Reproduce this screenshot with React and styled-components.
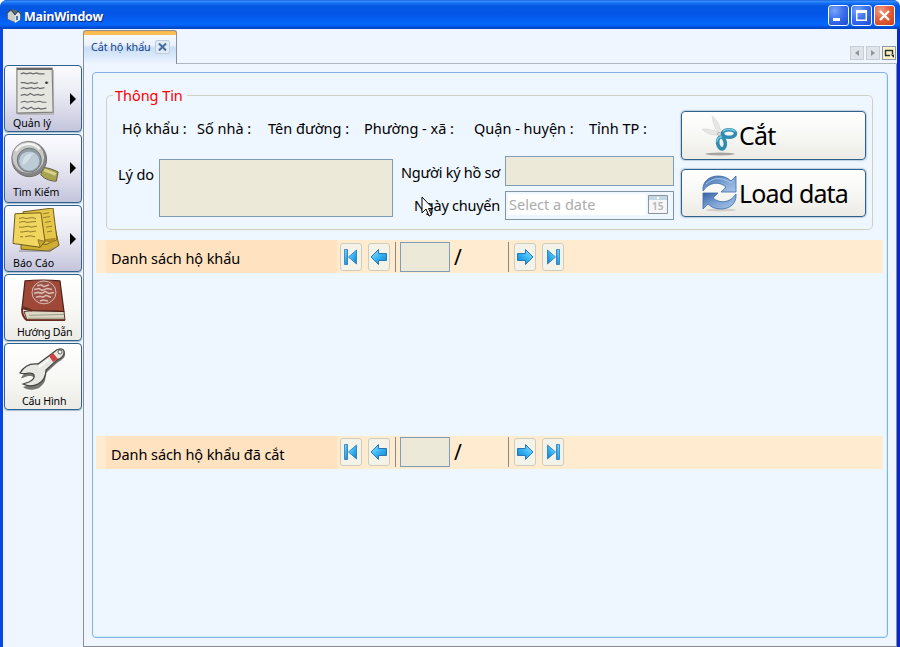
import React from 'react';
import styled, { createGlobalStyle } from 'styled-components';

const Global = createGlobalStyle`
  * { box-sizing: border-box; }
  body { margin: 0; overflow: hidden; font-family: "Noto Sans", sans-serif; color: #000; }
  button, input { font-family: inherit; margin: 0; padding: 0; }
  svg { display: block; flex: none; }
`;

const Window = styled.div`
  width: 900px; height: 647px;
  display: flex; flex-direction: column;
  background: #0a50e8;
  border-radius: 7px 7px 0 0;
  overflow: hidden;
`;
const TitleBar = styled.header`
  height: 29px; flex: none;
  display: flex; align-items: center;
  padding: 2px 5px 0 7px;
  background: linear-gradient(180deg, #0a4fd6 0, #3d92fb 1px, #1672f5 3px, #0558e2 6px, #0355e6 14px, #0563f8 22px, #0666fb 25px, #0350d8 27px, #0044c0 29px);
`;
const TitleText = styled.h1`
  flex: 1; margin: 2px 0 0 3px;
  font: 700 12.5px/16px "Open Sans", "Noto Sans", sans-serif;
  letter-spacing: ${p => p.$spacing};
  color: #fff; text-shadow: 1px 1px 0 #0a2a80;
`;
const CaptionButtons = styled.div` display: flex; gap: 2px; `;
const CaptionButton = styled.button`
  width: 21px; height: 21px;
  border: 1px solid #f4f8ff; border-radius: 3px;
  background: ${p => p.$close
    ? 'radial-gradient(circle at 30% 25%, #f0a088 0, #e2603c 45%, #cf3d13 100%)'
    : 'radial-gradient(circle at 30% 25%, #7ba5fa 0, #3d71ef 45%, #1c48d4 100%)'};
`;

const Frame = styled.div`
  flex: 1; display: flex; min-height: 0;
  border-left: 3px solid #0a46e4;
  border-right: 3px solid #0628cf;
  background: #eff6ff;
`;
const Sidebar = styled.nav`
  width: 80px; flex: none;
  display: grid; grid-template-rows: 67px 69px 67px 67px 67px; row-gap: 2px;
  align-content: start;
  padding: 36px 0 0 1px;
`;
const NavButton = styled.button`
  width: 78px;
  display: flex; flex-direction: column;
  position: relative;
  border: 1px solid #2c628b; border-radius: 4px;
  background: ${p => p.$menu
    ? 'linear-gradient(180deg, #fbfbff 0, #ececf5 40%, #cfcfe3 85%, #c3c3da 100%)'
    : 'linear-gradient(180deg, #fff 0, #f6f6f3 60%, #ecebe5 100%)'};
  box-shadow: 0 1px 1px #a9bccc;
`;
const NavArt = styled.span`
  height: 50px; flex: none;
  padding-left: ${p => p.$left}px; padding-top: ${p => p.$top}px;
`;
const NavLabel = styled.span`
  font-size: 10.6px; line-height: 14px; height: 15px; white-space: nowrap;
  padding-left: ${p => p.$left}px; text-align: left;
  letter-spacing: ${p => p.$spacing || '0'};
`;
const MenuMark = styled.i`
  position: absolute; right: 5px; top: 27px;
  border-left: 6px solid #000; border-top: 6px solid transparent; border-bottom: 6px solid transparent;
`;

const Main = styled.main` flex: 1; display: flex; flex-direction: column; min-width: 0; `;
const TabStrip = styled.div`
  height: 35px; flex: none; display: flex; align-items: flex-end; justify-content: space-between;
  padding: 1px 1px 0 0;
  box-shadow: inset 0 -1px #b0b8c2;
`;
const Tab = styled.div`
  width: 94px; height: 34px;
  display: flex; align-items: center; gap: 4px;
  padding: 2px 0 4px 7px;
  border: 1px solid #8c9199; border-bottom: 0; border-radius: 3px 3px 0 0;
  font-size: 10.8px; color: #15428b; white-space: nowrap;
  letter-spacing: ${p => p.$spacing};
  background: linear-gradient(180deg, #f0a93a 0, #ffbe52 1px, #ffbe52 4px, #f6faff 4px, #e9f2fd 14px, #c9dff6 17px, #dceafa 26px, #eff6ff 33px);
`;
const TabClose = styled.button`
  width: 15px; height: 14px; display: grid; place-items: center;
  border: 1px solid #c0cdda; border-radius: 2px; background: #e1ebf5;
`;
const TabTools = styled.div` display: flex; gap: 2px; padding-bottom: 4px; `;
const TabTool = styled.button`
  width: 14px; height: 14px; display: grid; place-items: center;
  border: 1px solid ${p => (p.$active ? '#8a96b8' : '#c7cdd4')};
  background: ${p => (p.$active ? '#fff3c2' : '#dfe4ea')};
`;
const TabBody = styled.section`
  flex: 1; display: flex; padding: 8px 8px 8px 8px;
  border: solid #8d8d91; border-width: 0 1px 1px 1px;
`;
const Panel = styled.div`
  width: 796px; flex: none; display: flex; flex-direction: column;
  border: 1px solid #86b0e6; border-radius: 4px;
  box-shadow: inset -1px -1px #c9f3fb;
  background: #eef6ff;
  padding: 14px 4px 0 3px;
`;

const Group = styled.fieldset`
  position: relative; min-width: 0;
  height: 143px; margin: 0 10px 0 10px; padding: 0 6px 0 11px;
  border: 1px solid #d0d0bf; border-radius: 5px;
  display: grid; grid-template-columns: 557px 185px; column-gap: 6px;
`;
const Legend = styled.legend`
  padding: 0 4px 0 2px; margin-left: -5px;
  color: #f00; font-size: 14.5px; line-height: 16px;
  letter-spacing: ${p => p.$spacing};
`;
const Details = styled.div` display: flex; flex-direction: column; `;
const Facts = styled.div`
  display: grid; grid-template-columns: 75px 71px 96px 110px 115px auto;
  padding: 15px 0 0 4px; height: 53px;
`;
const Text = styled.span`
  font-size: ${p => p.$size || 14.5}px; line-height: 20px; white-space: nowrap;
  letter-spacing: ${p => p.$spacing || '0'};
`;
const Form = styled.div`
  display: grid; grid-template-columns: 41px 234px 112px 169px; align-items: start;
`;
const ReasonLabel = styled.div` display: flex; padding-top: 8px; `;
const Reason = styled.div` height: 58px; margin-top: 3px; border: 1px solid #7f9db9; background: #ece9d8; `;
const Labels = styled.div`
  display: flex; flex-direction: column; align-items: flex-end; gap: 13px; padding: 6px 5px 0 0;
`;
const Fields = styled.div` display: flex; flex-direction: column; gap: 5px; `;
const Input = styled.input`
  width: ${p => p.$w}px; height: 30px; flex: none;
  border: 1px solid #7f9db9; background: #ece9d8; border-radius: 0;
`;
const DateBox = styled.div`
  height: 29px; display: flex; align-items: center; justify-content: space-between;
  padding: 0 5px 3px 3px; border: 1px solid #8294a8;
  background: linear-gradient(#fff, #fff) 2px 2px / 138px 21px no-repeat #eef6ff;
  color: #ababab;
`;
const Actions = styled.div` display: flex; flex-direction: column; gap: 9px; padding-top: 8px; `;
const Action = styled.button`
  height: ${p => p.$h}px; flex: none; display: flex; align-items: center;
  padding: 0 0 1px 19px;
  border: 1px solid #2f628b; border-radius: 4px;
  background: linear-gradient(180deg, #fff 0, #f7f7f4 50%, #ecebe5 100%);
  box-shadow: 0 0 1px 1px #bfd0e2;
`;

const ListBar = styled.div`
  height: 33px; margin-top: ${p => p.$top}px; padding: 0 0 ${p => p.$lift}px 10px;
  display: flex; align-items: center;
  background: linear-gradient(#ffe2c0, #ffe2c0) 10px 0 / 231px 33px no-repeat #ffebcf;
`;
const BarTitle = styled.div` width: 234px; padding: ${p => 3 + p.$lift}px 0 0 5px; display: flex; `;
const Buttons = styled.div` display: flex; gap: 6px; `;
const PagerButton = styled.button`
  width: 22px; height: 28px; display: grid; place-items: center;
  border: 1px solid #cfcdba; border-radius: 3px; background: #f4f3ea;
`;
const Rule = styled.i` width: 1px; height: 30px; margin: 0 ${p => p.$r}px 0 5px; background: #8b8b86; `;
const Total = styled.div` width: 53px; padding: 1px 0 0 4px; font-size: 21px; line-height: 28px; `;
const Pointer = styled.svg` position: absolute; left: 314px; top: 93px; z-index: 2; `;

const PageArt = () => (
  <svg width="40" height="48" viewBox="0 0 42 49" preserveAspectRatio="none">
    <path d="M3 3h38v46H3z" fill="#aaa" opacity=".7" />
    <path d="M2 1h37l1 45-38 1z" fill="#e6e6e1" stroke="#82827e" strokeWidth="1.2" />
    <path d="M2 2h37" stroke="#666" strokeWidth="2" />
    <path d="M6 7l3-1 3 1 4-1 3 1 4-1 2 1 6 0M6 16l4 0 3 1 4-1 4 1 3-1m8 0h3M6 22l3-1 3 1 5-1 3 1 4-1 2 1 5-1M6 29l4-1 3 1 3-2 4 2 4-1 3 1 4-1M6 36l4-1 3 1 5-1 3 1 5-1 3 1 4 0M6 43l3-2 4 2 4-2 3 2 5-1 2 1 6-1" fill="none" stroke="#6a6a6e" strokeWidth="1.2" />
    <circle cx="33" cy="16" r="1.3" fill="#333" />
  </svg>
);
const LensArt = () => (
  <svg width="52" height="45" viewBox="0 0 54 49" preserveAspectRatio="none">
    <path d="M31 27l6 6-4 3-5-6z" fill="#777" />
    <path d="M34 31c5 0 13 3 16 5l-2 10c-5 0-12-2-16-7z" fill="#a8a254" stroke="#5d5a34" />
    <path d="M36 32l12 5-1 3-12-5z" fill="#d8d387" />
    <ellipse cx="20" cy="22" rx="18" ry="19" fill="#858585" stroke="#6a6a6a" />
    <ellipse cx="19" cy="20" rx="17" ry="17.5" fill="#c9c9c9" stroke="#777" strokeWidth=".8" />
    <ellipse cx="20" cy="23" rx="12.5" ry="13" fill="#8f9aa2" stroke="#6f7478" />
    <ellipse cx="20" cy="24" rx="10.5" ry="10.5" fill="#bccbd5" />
    <path d="M13 28c0-9 4-12 13-13-6 2-5 11-13 13z" fill="#d5e1e9" />
    <path d="M6 13C11 4 25 3 31 11" stroke="#f6f6f6" strokeWidth="2.5" fill="none" />
  </svg>
);
const NotesArt = () => (
  <svg width="50" height="46" viewBox="0 0 50 48" preserveAspectRatio="none">
    <path d="M10 18l33-2 5 23-9 6-29-2z" fill="#d1ae31" stroke="#6b5b1b" />
    <path d="M12 4L42 0l4 33-11 5-23-4z" fill="#e7c74a" stroke="#6b5b1b" />
    <path d="M30 33l15-2-4 6z" fill="#b28c22" />
    <path d="M4 6l26-1 4 30-5 6-27-4z" fill="#f0d55f" stroke="#6b5b1b" />
    <path d="M27 33l7 2-5 6z" fill="#c9a431" stroke="#6b5b1b" strokeWidth=".7" />
    <path d="M8 11l4-1 3 1 6-1 4 1M8 15l5-1 3 1 9-1M8 20l4 0 5-1 3 1 6-1M9 25h3l5-1 2 1 6-1M9 30l3 0m2 0l5-1 5 1M32 6l6-1M32 10l7-1M34 15l6-1M35 20l6-1M36 25l5-1" stroke="#8f7b2c" strokeWidth="1" fill="none" />
    <path d="M8 45h28l9-4" stroke="#77777b" strokeWidth="1.2" fill="none" opacity=".6" />
  </svg>
);
const BookArt = () => (
  <svg width="47" height="44" viewBox="0 0 47 46" preserveAspectRatio="none">
    <path d="M4 34l9-1 31 1 1 9-38 0z" fill="#ddd8c4" stroke="#5a2b24" />
    <path d="M9 38l35-1M8 41h36" stroke="#8e8978" strokeWidth=".8" />
    <path d="M5 2C14 1 31 1 40 2l4 32c-12-1-25-1-33-1L2 31z" fill="#a04838" stroke="#4d2019" strokeWidth="1.2" />
    <path d="M2 30c2-1 6 1 10 3M2 31c0 6 2 10 5 12h38" stroke="#6c2a20" strokeWidth="2" fill="none" />
    <circle cx="24" cy="14" r="12" fill="#9a5147" stroke="#d9bcb1" />
    <path d="M17 7l4-1 3 2 5-2M14 11l5-1 3 2 5-2 5 1M14 15l4-1 4 1 3-2 4 2 5-1M16 19l4-1 3 1 3-2 5 2M20 23l3-1 5 1" stroke="#dcb8ad" strokeWidth="1.6" fill="none" />
  </svg>
);
const WrenchArt = () => (
  <svg width="48" height="46" viewBox="0 0 48 46">
    <path d="M4 27c5-6 12-8 15-9l17-14c4-4 10-3 10 1 1 4-3 7-8 10L27 25c-1 5 1 9-7 15-7 3-12 2-16-1 3-1 9-2 11-5 2-4-1-6-4-6-5 0-7 3-9 2z" fill="#777772" transform="translate(0 1)" />
    <path d="M1 26c4-7 10-10 18-9L35 5c4-4 9-4 10-1 1 4-3 8-7 9L27 23c0 6-2 11-8 14-6 3-11 2-15 0l6-2c4-2 6-4 5-7-2-4-9 0-14-2z" fill="#e8e8e2" stroke="#454542" strokeWidth="1.3" />
    <path d="M30 9l4-3 5 6-5 3z" fill="#cb4545" />
    <circle cx="41" cy="5" r="2" fill="#fff" stroke="#55554f" />
    <path d="M20 20L29 13" stroke="#fff" strokeWidth="2" />
  </svg>
);
const Scissors = () => (
  <svg width="38" height="42" viewBox="0 0 38 42">
    <ellipse cx="19" cy="40" rx="14.5" ry="1.5" fill="#a5a5a2" />
    <path d="M11 2c5 4 8 9 9 17l-3 0C14 14 12 8 11 2z" fill="#e6e6e3" stroke="#d2d2d0" strokeWidth=".6" />
    <path d="M1 15c7 0 12 1 17 4l-2 2C9 21 5 19 1 15z" fill="#e6e6e3" stroke="#d2d2d0" strokeWidth=".6" />
    <ellipse cx="28" cy="19.5" rx="6.5" ry="3.8" fill="none" stroke="#2f8cb0" strokeWidth="3.6" />
    <ellipse cx="20.500" cy="29" rx="3.8" ry="6" fill="none" stroke="#2f8cb0" strokeWidth="3.6" transform="rotate(-8 20 29)" />
    <path d="M22 17.500c3-3 9-3 12 0M16 28c0-4 2-5 5-5" stroke="#7acce2" strokeWidth="1.3" fill="none" />
    <circle cx="18" cy="20" r="1.5" fill="#eee" stroke="#999" strokeWidth=".7" />
  </svg>
);
const Reload = () => (
  <svg width="38" height="38" viewBox="0 0 38 38">
    <defs><linearGradient id="blue" x2="1" y2="1"><stop stopColor="#3563a8" /><stop offset=".5" stopColor="#7ba2d4" /><stop offset="1" stopColor="#a9c6e8" /></linearGradient></defs>
    <ellipse cx="20" cy="36" rx="15" ry="1.5" fill="#cfcfcb" />
    <path d="M2 17C1 7 9 2 17 2c6 0 10 2 13 5l5-5v16H20l5-5C18 7 8 8 2 17z" fill="url(#blue)" stroke="#3f6aa6" strokeWidth=".8" />
    <path d="M35 20c1 10-7 15-15 15-6 0-10-2-13-5l-5 5V19h15l-5 5c7 6 17 5 23-4z" fill="url(#blue)" stroke="#3f6aa6" strokeWidth=".8" />
    <path d="M5 10C13 2 23 4 30 9l3-3" fill="none" stroke="#a9c9ec" />
  </svg>
);
const Arrow = ({ flip, end }) => (
  <svg width="18" height="18" viewBox="0 0 18 18">
    <defs><linearGradient id="sky" x2="1" y2="1"><stop stopColor="#9be4ff" /><stop offset=".5" stopColor="#35b5f4" /><stop offset="1" stopColor="#1679c8" /></linearGradient></defs>
    <g transform={flip ? 'translate(18 0) scale(-1 1)' : undefined}>
      {end
        ? <g fill="url(#sky)" stroke="#2876b8" strokeWidth=".8"><path d="M2.5 1.5h3v15h-3z" /><path d="M14.5 2v14L6.5 9z" /></g>
        : <path d="M1 9l7.5-7.5v4h8v7h-8v4z" fill="url(#sky)" stroke="#2876b8" strokeWidth="1" />}
    </g>
  </svg>
);

const navItems = [
  { label: 'Quản lý', art: <PageArt />, artLeft: 10, artTop: 1, left: 8, menu: true },
  { label: 'Tìm Kiếm', art: <LensArt />, artLeft: 5, artTop: 4, left: 8, menu: true },
  { label: 'Báo Cáo', art: <NotesArt />, artLeft: 6, artTop: 2, left: 8, menu: true },
  { label: 'Hướng Dẫn', art: <BookArt />, artLeft: 15, artTop: 4, left: 12, spacing: '-0.25px' },
  { label: 'Cấu Hình', art: <WrenchArt />, artLeft: 14, artTop: 3, left: 17, spacing: '-0.15px' },
];
const facts = ['Hộ khẩu :', 'Số nhà :', 'Tên đường :', 'Phường - xã :', 'Quận - huyện :', 'Tỉnh TP :'];

const PagedList = ({ title, top, lift }) => (
  <ListBar $top={top} $lift={lift}>
    <BarTitle $lift={lift}><Text $spacing="-0.08px">{title}</Text></BarTitle>
    <Buttons>
      <PagerButton><Arrow end /></PagerButton>
      <PagerButton><Arrow /></PagerButton>
    </Buttons>
    <Rule $r={4} />
    <Input $w={50} readOnly />
    <Total>/</Total>
    <Rule $r={5} />
    <Buttons>
      <PagerButton><Arrow flip /></PagerButton>
      <PagerButton><Arrow flip end /></PagerButton>
    </Buttons>
  </ListBar>
);

export default function App() {
  return (
    <Window>
      <Global />
      <TitleBar>
        <svg width="14" height="15" viewBox="0 0 14 15">
          <path d="M0 4l5-3 9 3v7l-6 4-8-4z" fill="#5c6b78" />
          <path d="M1 5l3-2 4 4v7l-7-3z" fill="#c9cfcd" /><path d="M8 7l3-3 2 2v6l-5 3z" fill="#e2e4de" />
          <path d="M0 5l4-4 4 6 3-4 3 3" stroke="#2d4250" fill="none" /><path d="M9 8h2v4H9z" fill="#4b77a8" />
        </svg>
        <TitleText $spacing="-0.3px">MainWindow</TitleText>
        <CaptionButtons>
          <CaptionButton><svg width="19" height="19"><path d="M4 12h7v3H4z" fill="#fff" /></svg></CaptionButton>
          <CaptionButton><svg width="19" height="19"><path d="M4 4h11v11H4zM5.500 7v6.500h8V7z" fill="#fff" fillRule="evenodd" /></svg></CaptionButton>
          <CaptionButton $close><svg width="19" height="19"><path d="M5 5l9 9M14 5l-9 9" stroke="#fff" strokeWidth="2.3" /></svg></CaptionButton>
        </CaptionButtons>
      </TitleBar>
      <Frame>
        <Sidebar>
          {navItems.map(n => (
            <NavButton key={n.label} $menu={n.menu}>
              <NavArt $left={n.artLeft} $top={n.artTop}>{n.art}</NavArt>
              <NavLabel $left={n.left} $spacing={n.spacing}>{n.label}</NavLabel>
              {n.menu && <MenuMark />}
            </NavButton>
          ))}
        </Sidebar>
        <Main>
          <TabStrip>
            <Tab $spacing="-0.1px">
              Cắt hộ khẩu
              <TabClose><svg width="9" height="8"><path d="M1 .5l7 7M8 .5l-7 7" stroke="#3f6b9e" strokeWidth="2" /></svg></TabClose>
            </Tab>
            <TabTools>
              <TabTool><svg width="8" height="8"><path d="M6 1v6L2 4z" fill="#8f959c" /></svg></TabTool>
              <TabTool><svg width="8" height="8"><path d="M2 1v6l4-3z" fill="#8f959c" /></svg></TabTool>
              <TabTool $active><svg width="10" height="9"><path d="M8.500 5V1.500h-7v5H6" fill="none" stroke="#25313b" strokeWidth="1.4" /><path d="M6.500 5.500H10V9z" fill="#25313b" /></svg></TabTool>
            </TabTools>
          </TabStrip>
          <TabBody>
            <Panel>
              <Group>
                <Legend $spacing="-0.05px">Thông Tin</Legend>
                <Details>
                  <Facts>{facts.map(f => <Text key={f}>{f}</Text>)}</Facts>
                  <Form>
                    <ReasonLabel><Text $spacing="-0.1px">Lý do</Text></ReasonLabel>
                    <Reason />
                    <Labels><Text $spacing="-0.25px">Người ký hồ sơ</Text><Text $spacing="-0.25px">Ngày chuyển</Text></Labels>
                    <Fields>
                      <Input $w={169} readOnly />
                      <DateBox>
                        <Text>Select a date</Text>
                        <svg width="20" height="19" viewBox="0 0 20 19">
                          <path d="M.5.5h19v18H.5z" fill="#f5f6f7" stroke="#8e9499" /><path d="M1 1h18v4H1z" fill="#c3d6e6" /><circle cx="10" cy="3" r="1.300" fill="#fff" />
                          <text x="4" y="15" fontSize="10" fontWeight="600" fill="#b3b3b3" fontFamily="Noto Sans">15</text>
                        </svg>
                      </DateBox>
                    </Fields>
                  </Form>
                </Details>
                <Actions>
                  <Action $h={49}><Scissors /><Text $size={25} $spacing="-0.75px">Cắt</Text></Action>
                  <Action $h={48}><Reload /><Text $size={25} $spacing="-0.85px">Load data</Text></Action>
                </Actions>
                <Pointer width="13" height="21" viewBox="0 0 13 21">
                  <path d="M1 1v16l4-4 3 7 2.500-1-3-6.500H12z" fill="#fff" stroke="#000" />
                </Pointer>
              </Group>
              <PagedList title="Danh sách hộ khẩu" top={10} lift={0} />
              <PagedList title="Danh sách hộ khẩu đã cắt" top={163} lift={2} />
            </Panel>
          </TabBody>
        </Main>
      </Frame>
    </Window>
  );
}
